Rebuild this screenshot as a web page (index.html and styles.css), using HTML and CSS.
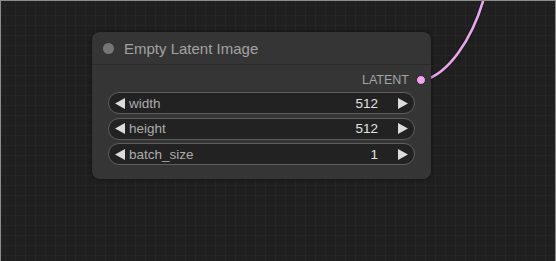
FILE: index.html
```html
<!DOCTYPE html>
<html>
<head>
<meta charset="utf-8">
<link rel="stylesheet" href="styles.css">
</head>
<body>
<div class="canvas">
  <svg class="links" width="556" height="261" viewBox="0 0 556 261">
    <path d="M424 80 C 448 74, 472 40, 484 -2" class="link-outline"/>
    <path d="M424 80 C 448 74, 472 40, 484 -2" class="link"/>
  </svg>
  <div class="node">
    <div class="node-title">
      <span class="title-dot"></span>
      <span class="title-text">Empty Latent Image</span>
    </div>
    <div class="node-body">
      <div class="output-row">
        <span class="output-label">LATENT</span>
        <span class="output-dot"></span>
      </div>
      <div class="widget">
        <svg class="arrow" width="10" height="11" viewBox="0 0 10 11"><path d="M0 5.5 L10 0 L10 11 Z"/></svg>
        <span class="w-label">width</span>
        <span class="w-value">512</span>
        <svg class="arrow" width="10" height="11" viewBox="0 0 10 11"><path d="M10 5.5 L0 0 L0 11 Z"/></svg>
      </div>
      <div class="widget">
        <svg class="arrow" width="10" height="11" viewBox="0 0 10 11"><path d="M0 5.5 L10 0 L10 11 Z"/></svg>
        <span class="w-label">height</span>
        <span class="w-value">512</span>
        <svg class="arrow" width="10" height="11" viewBox="0 0 10 11"><path d="M10 5.5 L0 0 L0 11 Z"/></svg>
      </div>
      <div class="widget">
        <svg class="arrow" width="10" height="11" viewBox="0 0 10 11"><path d="M0 5.5 L10 0 L10 11 Z"/></svg>
        <span class="w-label">batch_size</span>
        <span class="w-value">1</span>
        <svg class="arrow" width="10" height="11" viewBox="0 0 10 11"><path d="M10 5.5 L0 0 L0 11 Z"/></svg>
      </div>
    </div>
  </div>
</div>
</body>
</html>
```
FILE: styles.css
```css
html, body {
  margin: 0;
  padding: 0;
  background: #1e1e1e;
}
.canvas {
  position: relative;
  width: 556px;
  height: 261px;
  box-sizing: border-box;
  border-top: 1px solid #8c8c8c;
  border-left: 1px solid #8c8c8c;
  border-right: 1px solid #8c8c8c;
  background-color: #1f1f1f;
  background-image:
    linear-gradient(to right, #252525 1px, transparent 1px),
    linear-gradient(to bottom, #252525 1px, transparent 1px);
  background-size: 10px 10px;
  background-position: 4px 4px;
  overflow: hidden;
  font-family: Arial, "Liberation Sans", sans-serif;
}
.links {
  position: absolute;
  left: -1px;
  top: -1px;
}
.link-outline {
  fill: none;
  stroke: #1a1a1a;
  stroke-width: 4.5;
}
.link {
  fill: none;
  stroke: #e9a6ea;
  stroke-width: 2.6;
}
.node {
  position: absolute;
  left: 91px;
  top: 31px;
  width: 339px;
  height: 147px;
  background: #353535;
  border-radius: 8px;
  box-shadow: 0 0 4px rgba(0,0,0,0.5);
  display: flex;
  flex-direction: column;
}
.node-title {
  height: 33px;
  flex: none;
  box-sizing: border-box;
  border-bottom: 1px solid #2c2c2c;
  display: flex;
  align-items: center;
  padding-left: 11px;
  gap: 10px;
}
.title-dot {
  width: 11px;
  height: 11px;
  border-radius: 50%;
  background: #767676;
}
.title-text {
  color: #a3a3a3;
  font-size: 15px;
}
.node-body {
  display: flex;
  flex-direction: column;
  gap: 3.5px;
  padding: 5.5px 16px 0 16px;
}
.output-row {
  display: flex;
  justify-content: flex-end;
  align-items: center;
  height: 18px;
  margin-right: -11px;
  gap: 7px;
}
.output-label {
  color: #a4a4a4;
  font-size: 12.5px;
}
.output-dot {
  width: 8px;
  height: 8px;
  border-radius: 50%;
  background: #f1a4f1;
  border: 1px solid #222;
}
.widget {
  height: 22px;
  flex: none;
  box-sizing: border-box;
  background: #222;
  border: 1px solid #5e5e5e;
  border-radius: 11px;
  display: flex;
  align-items: center;
  padding: 0 6px 0 6px;
  font-size: 13.5px;
}
.arrow {
  fill: #dcdcdc;
  flex: none;
}
.w-label {
  color: #acacac;
  margin-left: 4px;
  flex: 1;
}
.w-value {
  color: #e2e2e2;
  margin-right: 20px;
}
```
